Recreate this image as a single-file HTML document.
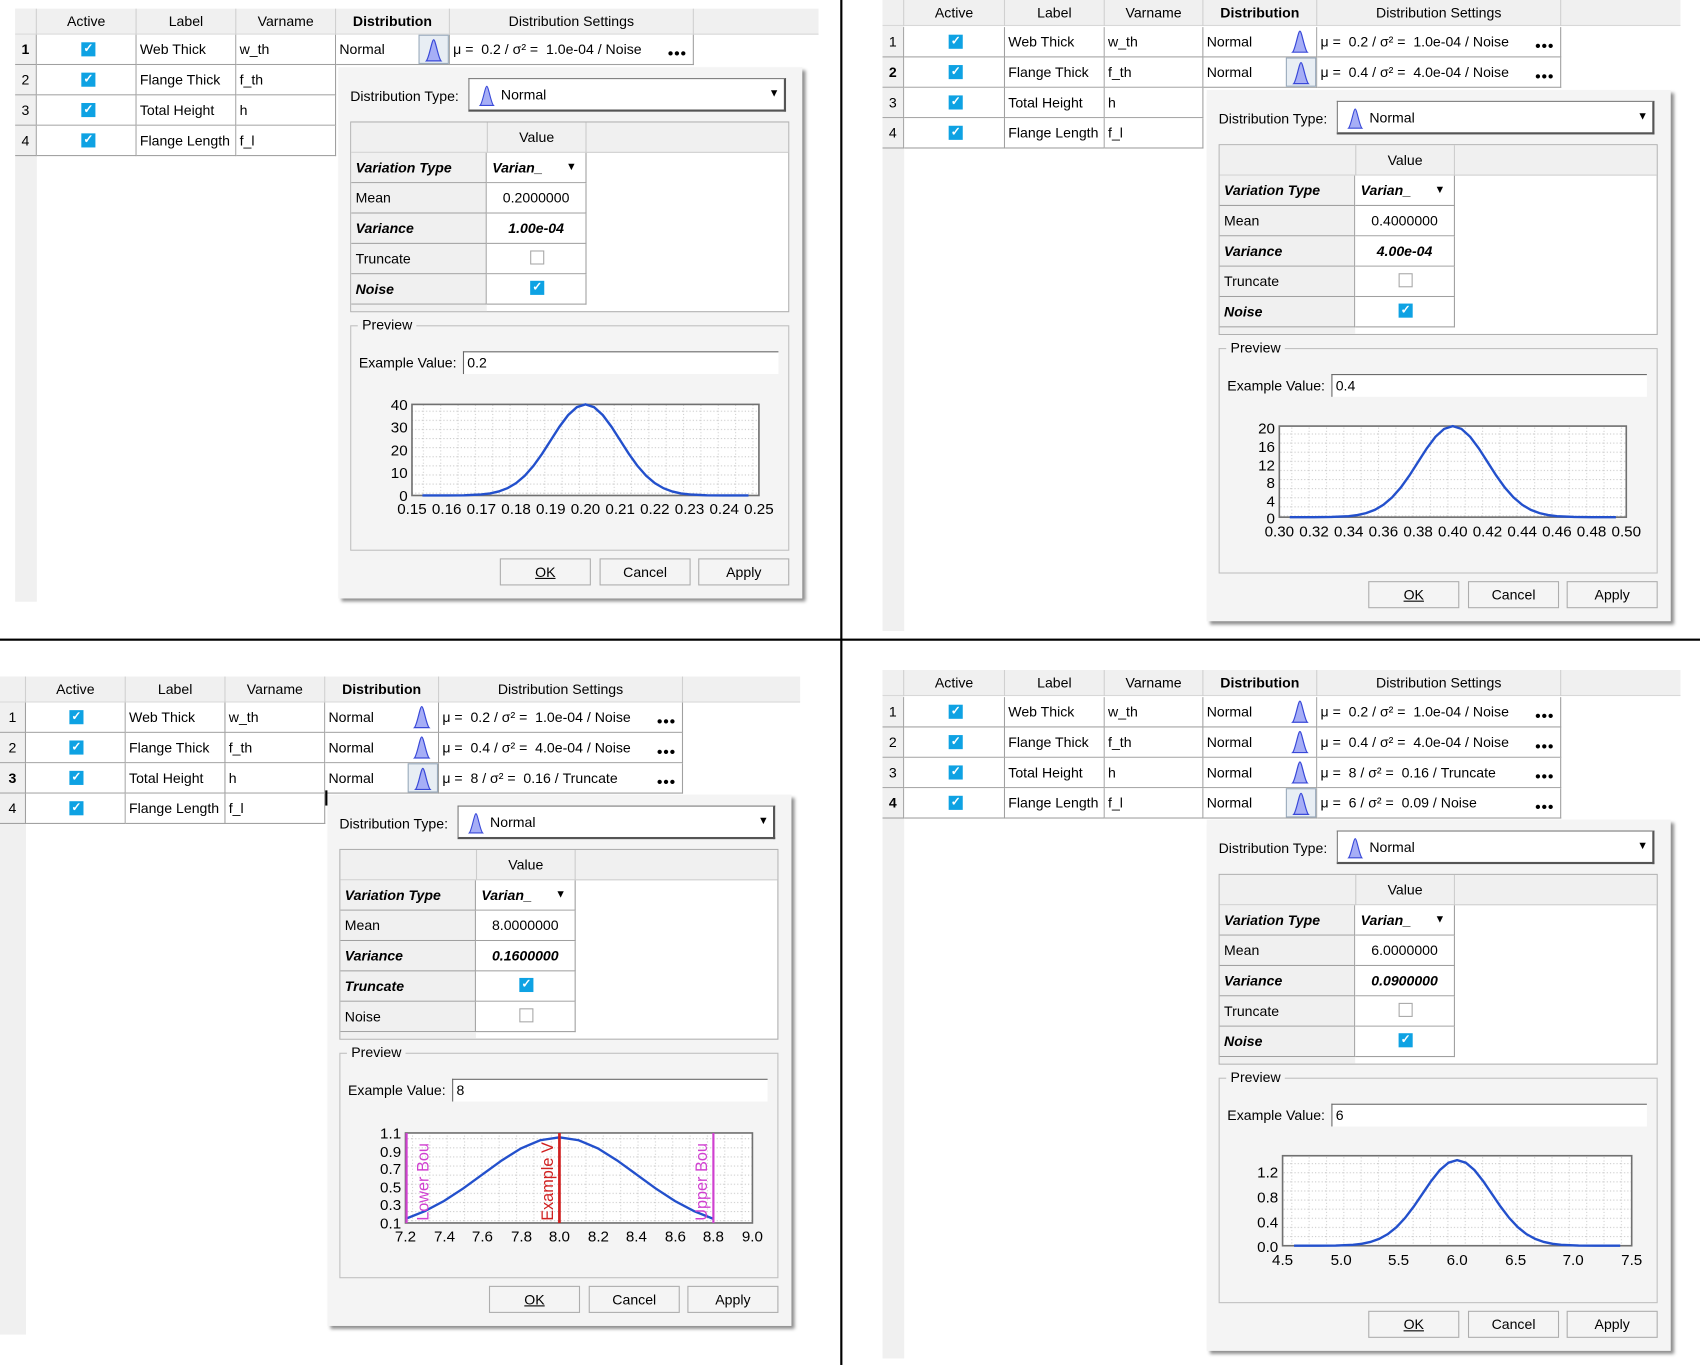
<!DOCTYPE html>
<html><head><meta charset="utf-8">
<style>
*{box-sizing:border-box;margin:0;padding:0}
html,body{width:1700px;height:1365px;overflow:hidden;background:#fff}
#root{position:absolute;left:0;top:0;width:1568px;height:1259px;transform:scale(1.08418);transform-origin:0 0;font-family:"Liberation Sans",sans-serif;font-size:13px;color:#000}
.a{position:absolute}
.q{position:absolute}
.hb{position:absolute;left:0;top:0;height:24px;background:#f0f0f0;border-bottom:1px solid #d8d8d8}
.gut{position:absolute;left:0;width:20px;background:#f0f0f0}
.h{position:absolute;top:0;height:24px;line-height:24px;text-align:center;border-right:1px solid #d0d0d0}
.c{position:absolute;height:28px;line-height:28px;border-right:1px solid #a0a0a0;border-bottom:1px solid #a0a0a0;background:#fff;padding-left:3px;white-space:nowrap;overflow:hidden}
.rn{position:absolute;left:0;width:20px;height:28px;line-height:28px;text-align:center;border-bottom:1px solid #a0a0a0;border-right:1px solid #a0a0a0;background:#f0f0f0}
.cb{position:absolute;width:13px;height:13px;background:#0ea2e3;color:#fff;font-size:11px;line-height:13px;text-align:center;font-weight:bold}
.cbe{position:absolute;width:13px;height:13px;border:1px solid #a8a8a8;background:#fff}
.ib{position:absolute;width:28px;height:27px}
.ib.sel{border:1px solid #9ab;background:#e8eef4}
.dots{position:absolute;font-weight:bold;font-size:14px;letter-spacing:1px}
.dlg{position:absolute;width:428px;height:490px;background:#f4f4f4;box-shadow:3px 3px 3px rgba(0,0,0,.45)}
.combo{position:absolute;left:120px;top:10px;width:293px;height:31px;background:#fff;border-top:1px solid #7a7a7a;border-left:1px solid #7a7a7a;border-right:2px solid #555;border-bottom:2px solid #555}
.grid{position:absolute;left:11px;top:50px;width:405px;height:176px;background:#fff;border:1px solid #b0b0b0}
.gh{position:absolute;left:0;top:0;width:403px;height:28px;background:#f0f0f0;border-bottom:1px solid #d0d0d0}
.gl{position:absolute;left:0;width:125px;height:28px;line-height:28px;padding-left:4px;background:#f0f0f0;border-bottom:1px solid #a0a0a0;border-right:1px solid #a0a0a0}
.gv{position:absolute;left:125px;width:92px;height:28px;line-height:28px;background:#fff;border-bottom:1px solid #a0a0a0;border-right:1px solid #a0a0a0;text-align:center}
.bi{font-weight:bold;font-style:italic}
.grp{position:absolute;left:11px;top:238px;width:405px;height:208px;border:1px solid #c0c0c0}
.leg{position:absolute;left:6px;top:-9px;background:#f4f4f4;padding:0 4px}
.inp{position:absolute;left:115px;top:262px;width:291px;height:21px;background:#fff;border-top:1px solid #666;border-left:1px solid #666;line-height:20px;padding-left:3px}
.btn{position:absolute;top:453px;width:84px;height:25px;border:1px solid #adadad;background:#f4f4f4;text-align:center;line-height:23px}
svg text{font-family:"Liberation Sans",sans-serif}
</style></head><body><div id="root">

<svg width="0" height="0" style="position:absolute">
<defs>
<symbol id="ico" viewBox="0 0 20 26"><path d="M2,25 C5,22 8,2 10,2 C12,2 15,22 18,25 Z" fill="#a6aef6" stroke="#3848d8" stroke-width="1.3"/></symbol>
<pattern id="gp" width="16" height="8.4" patternUnits="userSpaceOnUse"><path d="M0,0.5H16" stroke="#c8c8c8" stroke-dasharray="1,2"/><path d="M0.5,0V8.4" stroke="#d0d0d0" stroke-dasharray="1,2"/></pattern>
</defs>
</svg>

<!-- dividers -->
<div class="a" style="left:0;top:589px;width:1568px;height:2px;background:#000"></div>
<div class="a" style="left:775px;top:0;width:2px;height:1259px;background:#000"></div>

<!-- ============ Q1 TABLE ============ -->
<div class="q" style="left:14px;top:8px">
<div class="gut" style="top:0;height:547px"></div>
<div class="hb" style="width:741px"></div>
<div class="h" style="left:0;width:20px"></div>
<div class="h" style="left:20px;width:92px">Active</div>
<div class="h" style="left:112px;width:92px">Label</div>
<div class="h" style="left:204px;width:92px">Varname</div>
<div class="h" style="left:296px;width:105px;font-weight:bold">Distribution</div>
<div class="h" style="left:401px;width:225px">Distribution Settings</div>

<div class="rn" style="top:24px;font-weight:bold">1</div>
<div class="c" style="left:20px;top:24px;width:92px"></div><div class="cb" style="left:61px;top:31px">✓</div>
<div class="c" style="left:112px;top:24px;width:92px">Web Thick</div>
<div class="c" style="left:204px;top:24px;width:92px">w_th</div>
<div class="c" style="left:296px;top:24px;width:105px">Normal</div>
<div class="ib sel" style="left:372px;top:24px"><svg width="26" height="25"><use href="#ico" x="4" y="2" width="18" height="22"/></svg></div>
<div class="c" style="left:401px;top:24px;width:225px">μ =&nbsp; 0.2 / σ² =&nbsp; 1.0e-04 / Noise</div>
<div class="dots" style="left:602px;top:33px">•••</div>

<div class="rn" style="top:52px">2</div>
<div class="c" style="left:20px;top:52px;width:92px"></div><div class="cb" style="left:61px;top:59px">✓</div>
<div class="c" style="left:112px;top:52px;width:92px">Flange Thick</div>
<div class="c" style="left:204px;top:52px;width:92px">f_th</div>
<div class="rn" style="top:80px">3</div>
<div class="c" style="left:20px;top:80px;width:92px"></div><div class="cb" style="left:61px;top:87px">✓</div>
<div class="c" style="left:112px;top:80px;width:92px">Total Height</div>
<div class="c" style="left:204px;top:80px;width:92px">h</div>
<div class="rn" style="top:108px">4</div>
<div class="c" style="left:20px;top:108px;width:92px"></div><div class="cb" style="left:61px;top:115px">✓</div>
<div class="c" style="left:112px;top:108px;width:92px">Flange Length</div>
<div class="c" style="left:204px;top:108px;width:92px">f_l</div>
</div>

<!-- Q1 DIALOG -->
<div class="dlg" style="left:312px;top:62px">
<div class="a" style="left:11px;top:19px">Distribution Type:</div>
<div class="combo"><svg class="a" style="left:6px;top:5px" width="20" height="20"><use href="#ico" width="20" height="20"/></svg><span class="a" style="left:29px;top:7px">Normal</span><span class="a" style="right:4px;top:8px;font-size:10px">▼</span></div>
<div class="grid"><div class="gh"></div>
<div class="a" style="left:125px;top:0;width:92px;height:28px;line-height:28px;text-align:center;border-left:1px solid #ccc;border-right:1px solid #ccc">Value</div>
<div class="gl bi" style="top:28px">Variation Type</div><div class="gv bi" style="top:28px;text-align:left;padding-left:5px">Varian_<span style="position:absolute;right:8px;font-size:10px;font-style:normal">▼</span></div>
<div class="gl" style="top:56px">Mean</div><div class="gv" style="top:56px">0.2000000</div>
<div class="gl bi" style="top:84px">Variance</div><div class="gv bi" style="top:84px">1.00e-04</div>
<div class="gl" style="top:112px">Truncate</div><div class="gv" style="top:112px"></div><div class="cbe" style="left:165px;top:118px"></div>
<div class="gl bi" style="top:140px">Noise</div><div class="gv" style="top:140px"></div><div class="cb" style="left:165px;top:146px">✓</div>
<div class="a" style="left:0;top:168px;width:125px;height:6px;background:#f0f0f0"></div>
</div>
<div class="grp"><span class="leg">Preview</span></div>
<div class="a" style="left:19px;top:265px">Example Value:</div>
<div class="inp">0.2</div>
<svg class="a" style="left:30px;top:300px" width="395" height="125">
<rect x="38" y="11" width="320" height="84" fill="#fff"/><rect x="38" y="11" width="320" height="84" fill="url(#gp)"/>
<rect x="38" y="11" width="320" height="84" fill="none" stroke="#707070" stroke-width="1.5"/>
<g transform="translate(198,11) scale(32,84)"><path vector-effect="non-scaling-stroke" fill="none" stroke="#2350cc" stroke-width="2.2" d="M-4.7,1 L-4,1 L-3.5,.9978 L-3,.9889 L-2.75,.9772 L-2.5,.9561 L-2.25,.9204 L-2,.8647 L-1.75,.7837 L-1.5,.6753 L-1.25,.5422 L-1,.3935 L-.75,.2452 L-.5,.1175 L-.25,.031 L0,0 L.25,.031 L.5,.1175 L.75,.2452 L1,.3935 L1.25,.5422 L1.5,.6753 L1.75,.7837 L2,.8647 L2.25,.9204 L2.5,.9561 L2.75,.9772 L3,.9889 L3.5,.9978 L4,1 L4.7,1"/></g>
<g font-size="14" text-anchor="end"><text x="34" y="16">40</text><text x="34" y="37">30</text><text x="34" y="58">20</text><text x="34" y="79">10</text><text x="34" y="100">0</text></g>
<g font-size="14" text-anchor="middle"><text x="38" y="112">0.15</text><text x="70" y="112">0.16</text><text x="102" y="112">0.17</text><text x="134" y="112">0.18</text><text x="166" y="112">0.19</text><text x="198" y="112">0.20</text><text x="230" y="112">0.21</text><text x="262" y="112">0.22</text><text x="294" y="112">0.23</text><text x="326" y="112">0.24</text><text x="358" y="112">0.25</text></g>
</svg>
<div class="btn" style="left:149px"><u>OK</u></div><div class="btn" style="left:241px">Cancel</div><div class="btn" style="left:332px">Apply</div>
</div>

<!-- ============ Q2 TABLE ============ -->
<div class="q" style="left:814px;top:0px">
<div class="gut" style="top:0;height:582px"></div>
<div class="hb" style="width:736px"></div>
<div class="h" style="left:0;width:20px"></div>
<div class="h" style="left:20px;width:93px">Active</div>
<div class="h" style="left:113px;width:92px">Label</div>
<div class="h" style="left:205px;width:91px">Varname</div>
<div class="h" style="left:296px;width:105px;font-weight:bold">Distribution</div>
<div class="h" style="left:401px;width:225px">Distribution Settings</div>

<div class="rn" style="top:25px">1</div>
<div class="c" style="left:20px;top:25px;width:93px"></div><div class="cb" style="left:61px;top:32px">✓</div>
<div class="c" style="left:113px;top:25px;width:92px">Web Thick</div>
<div class="c" style="left:205px;top:25px;width:91px">w_th</div>
<div class="c" style="left:296px;top:25px;width:105px">Normal</div>
<div class="ib" style="left:372px;top:25px"><svg width="26" height="25"><use href="#ico" x="4" y="2" width="18" height="22"/></svg></div>
<div class="c" style="left:401px;top:25px;width:225px">μ =&nbsp; 0.2 / σ² =&nbsp; 1.0e-04 / Noise</div>
<div class="dots" style="left:602px;top:34px">•••</div>

<div class="rn" style="top:53px;font-weight:bold">2</div>
<div class="c" style="left:20px;top:53px;width:93px"></div><div class="cb" style="left:61px;top:60px">✓</div>
<div class="c" style="left:113px;top:53px;width:92px">Flange Thick</div>
<div class="c" style="left:205px;top:53px;width:91px">f_th</div>
<div class="c" style="left:296px;top:53px;width:105px">Normal</div>
<div class="ib sel" style="left:372px;top:53px"><svg width="26" height="25"><use href="#ico" x="4" y="2" width="18" height="22"/></svg></div>
<div class="c" style="left:401px;top:53px;width:225px">μ =&nbsp; 0.4 / σ² =&nbsp; 4.0e-04 / Noise</div>
<div class="dots" style="left:602px;top:62px">•••</div>

<div class="rn" style="top:81px">3</div>
<div class="c" style="left:20px;top:81px;width:93px"></div><div class="cb" style="left:61px;top:88px">✓</div>
<div class="c" style="left:113px;top:81px;width:92px">Total Height</div>
<div class="c" style="left:205px;top:81px;width:91px">h</div>
<div class="rn" style="top:109px">4</div>
<div class="c" style="left:20px;top:109px;width:93px"></div><div class="cb" style="left:61px;top:116px">✓</div>
<div class="c" style="left:113px;top:109px;width:92px">Flange Length</div>
<div class="c" style="left:205px;top:109px;width:91px">f_l</div>
</div>

<!-- Q2 DIALOG -->
<div class="dlg" style="left:1113px;top:83px">
<div class="a" style="left:11px;top:19px">Distribution Type:</div>
<div class="combo"><svg class="a" style="left:6px;top:5px" width="20" height="20"><use href="#ico" width="20" height="20"/></svg><span class="a" style="left:29px;top:7px">Normal</span><span class="a" style="right:4px;top:8px;font-size:10px">▼</span></div>
<div class="grid"><div class="gh"></div>
<div class="a" style="left:125px;top:0;width:92px;height:28px;line-height:28px;text-align:center;border-left:1px solid #ccc;border-right:1px solid #ccc">Value</div>
<div class="gl bi" style="top:28px">Variation Type</div><div class="gv bi" style="top:28px;text-align:left;padding-left:5px">Varian_<span style="position:absolute;right:8px;font-size:10px;font-style:normal">▼</span></div>
<div class="gl" style="top:56px">Mean</div><div class="gv" style="top:56px">0.4000000</div>
<div class="gl bi" style="top:84px">Variance</div><div class="gv bi" style="top:84px">4.00e-04</div>
<div class="gl" style="top:112px">Truncate</div><div class="gv" style="top:112px"></div><div class="cbe" style="left:165px;top:118px"></div>
<div class="gl bi" style="top:140px">Noise</div><div class="gv" style="top:140px"></div><div class="cb" style="left:165px;top:146px">✓</div>
<div class="a" style="left:0;top:168px;width:125px;height:6px;background:#f0f0f0"></div>
</div>
<div class="grp"><span class="leg">Preview</span></div>
<div class="a" style="left:19px;top:265px">Example Value:</div>
<div class="inp">0.4</div>
<svg class="a" style="left:30px;top:300px" width="395" height="125">
<rect x="37" y="10" width="320" height="84" fill="#fff"/><rect x="37" y="10" width="320" height="84" fill="url(#gp)"/>
<rect x="37" y="10" width="320" height="84" fill="none" stroke="#707070" stroke-width="1.5"/>
<g transform="translate(197,10) scale(32,84)"><path vector-effect="non-scaling-stroke" fill="none" stroke="#2350cc" stroke-width="2.2" d="M-4.7,1 L-4,1 L-3.5,.9978 L-3,.9889 L-2.75,.9772 L-2.5,.9561 L-2.25,.9204 L-2,.8647 L-1.75,.7837 L-1.5,.6753 L-1.25,.5422 L-1,.3935 L-.75,.2452 L-.5,.1175 L-.25,.031 L0,0 L.25,.031 L.5,.1175 L.75,.2452 L1,.3935 L1.25,.5422 L1.5,.6753 L1.75,.7837 L2,.8647 L2.25,.9204 L2.5,.9561 L2.75,.9772 L3,.9889 L3.5,.9978 L4,1 L4.7,1"/></g>
<g font-size="14" text-anchor="end"><text x="33" y="17">20</text><text x="33" y="34">16</text><text x="33" y="51">12</text><text x="33" y="67">8</text><text x="33" y="84">4</text><text x="33" y="100">0</text></g>
<g font-size="14" text-anchor="middle"><text x="37" y="112">0.30</text><text x="69" y="112">0.32</text><text x="101" y="112">0.34</text><text x="133" y="112">0.36</text><text x="165" y="112">0.38</text><text x="197" y="112">0.40</text><text x="229" y="112">0.42</text><text x="261" y="112">0.44</text><text x="293" y="112">0.46</text><text x="325" y="112">0.48</text><text x="357" y="112">0.50</text></g>
</svg>
<div class="btn" style="left:149px"><u>OK</u></div><div class="btn" style="left:241px">Cancel</div><div class="btn" style="left:332px">Apply</div>
</div>

<!-- ============ Q3 TABLE ============ -->
<div class="q" style="left:0px;top:624px">
<div class="gut" style="top:0;height:607px;width:24px"></div>
<div class="hb" style="width:738px"></div>
<div class="h" style="left:0;width:24px"></div>
<div class="h" style="left:24px;width:92px">Active</div>
<div class="h" style="left:116px;width:92px">Label</div>
<div class="h" style="left:208px;width:92px">Varname</div>
<div class="h" style="left:300px;width:105px;font-weight:bold">Distribution</div>
<div class="h" style="left:405px;width:225px">Distribution Settings</div>

<div class="rn" style="top:24px;width:24px">1</div>
<div class="c" style="left:24px;top:24px;width:92px"></div><div class="cb" style="left:64px;top:31px">✓</div>
<div class="c" style="left:116px;top:24px;width:92px">Web Thick</div>
<div class="c" style="left:208px;top:24px;width:92px">w_th</div>
<div class="c" style="left:300px;top:24px;width:105px">Normal</div>
<div class="ib" style="left:376px;top:24px"><svg width="26" height="25"><use href="#ico" x="4" y="2" width="18" height="22"/></svg></div>
<div class="c" style="left:405px;top:24px;width:225px">μ =&nbsp; 0.2 / σ² =&nbsp; 1.0e-04 / Noise</div>
<div class="dots" style="left:606px;top:33px">•••</div>

<div class="rn" style="top:52px;width:24px">2</div>
<div class="c" style="left:24px;top:52px;width:92px"></div><div class="cb" style="left:64px;top:59px">✓</div>
<div class="c" style="left:116px;top:52px;width:92px">Flange Thick</div>
<div class="c" style="left:208px;top:52px;width:92px">f_th</div>
<div class="c" style="left:300px;top:52px;width:105px">Normal</div>
<div class="ib" style="left:376px;top:52px"><svg width="26" height="25"><use href="#ico" x="4" y="2" width="18" height="22"/></svg></div>
<div class="c" style="left:405px;top:52px;width:225px">μ =&nbsp; 0.4 / σ² =&nbsp; 4.0e-04 / Noise</div>
<div class="dots" style="left:606px;top:61px">•••</div>

<div class="rn" style="top:80px;width:24px;font-weight:bold">3</div>
<div class="c" style="left:24px;top:80px;width:92px"></div><div class="cb" style="left:64px;top:87px">✓</div>
<div class="c" style="left:116px;top:80px;width:92px">Total Height</div>
<div class="c" style="left:208px;top:80px;width:92px">h</div>
<div class="c" style="left:300px;top:80px;width:105px">Normal</div>
<div class="ib sel" style="left:376px;top:80px"><svg width="26" height="25"><use href="#ico" x="4" y="2" width="18" height="22"/></svg></div>
<div class="c" style="left:405px;top:80px;width:225px">μ =&nbsp; 8 / σ² =&nbsp; 0.16 / Truncate</div>
<div class="dots" style="left:606px;top:89px">•••</div>

<div class="rn" style="top:108px;width:24px">4</div>
<div class="c" style="left:24px;top:108px;width:92px"></div><div class="cb" style="left:64px;top:115px">✓</div>
<div class="c" style="left:116px;top:108px;width:92px">Flange Length</div>
<div class="c" style="left:208px;top:108px;width:92px">f_l</div>
</div>

<!-- Q3 DIALOG -->
<div class="dlg" style="left:302px;top:733px">
<div class="a" style="left:11px;top:19px">Distribution Type:</div>
<div class="combo"><svg class="a" style="left:6px;top:5px" width="20" height="20"><use href="#ico" width="20" height="20"/></svg><span class="a" style="left:29px;top:7px">Normal</span><span class="a" style="right:4px;top:8px;font-size:10px">▼</span></div>
<div class="grid"><div class="gh"></div>
<div class="a" style="left:125px;top:0;width:92px;height:28px;line-height:28px;text-align:center;border-left:1px solid #ccc;border-right:1px solid #ccc">Value</div>
<div class="gl bi" style="top:28px">Variation Type</div><div class="gv bi" style="top:28px;text-align:left;padding-left:5px">Varian_<span style="position:absolute;right:8px;font-size:10px;font-style:normal">▼</span></div>
<div class="gl" style="top:56px">Mean</div><div class="gv" style="top:56px">8.0000000</div>
<div class="gl bi" style="top:84px">Variance</div><div class="gv bi" style="top:84px">0.1600000</div>
<div class="gl bi" style="top:112px">Truncate</div><div class="gv" style="top:112px"></div><div class="cb" style="left:165px;top:118px">✓</div>
<div class="gl" style="top:140px">Noise</div><div class="gv" style="top:140px"></div><div class="cbe" style="left:165px;top:146px"></div>
<div class="a" style="left:0;top:168px;width:125px;height:6px;background:#f0f0f0"></div>
</div>
<div class="grp"><span class="leg">Preview</span></div>
<div class="a" style="left:19px;top:265px">Example Value:</div>
<div class="inp">8</div>
<svg class="a" style="left:30px;top:300px" width="395" height="125">
<rect x="42" y="12" width="320" height="83" fill="#fff"/><rect x="42" y="12" width="320" height="83" fill="url(#gp)"/>
<rect x="42" y="12" width="320" height="83" fill="none" stroke="#707070" stroke-width="1.5"/>
<g transform="translate(184,16) scale(71,87)"><path vector-effect="non-scaling-stroke" fill="none" stroke="#2350cc" stroke-width="2.2" d="M-2,.8647 L-1.75,.7837 L-1.5,.6753 L-1.25,.5422 L-1,.3935 L-.75,.2452 L-.5,.1175 L-.25,.031 L0,0 L.25,.031 L.5,.1175 L.75,.2452 L1,.3935 L1.25,.5422 L1.5,.6753 L1.75,.7837 L2,.8647"/></g>
<line x1="43" y1="12" x2="43" y2="95" stroke="#d040d0" stroke-width="2"/>
<line x1="326" y1="12" x2="326" y2="95" stroke="#d040d0" stroke-width="2"/>
<line x1="184" y1="12" x2="184" y2="95" stroke="#d02020" stroke-width="2.5"/>
<text transform="translate(63,93) rotate(-90)" font-size="15" fill="#d040d0">Lower Bou</text>
<text transform="translate(178,93) rotate(-90)" font-size="15" fill="#d02020">Example V</text>
<text transform="translate(320,93) rotate(-90)" font-size="15" fill="#d040d0">Upper Bou</text>
<g font-size="14" text-anchor="end"><text x="38" y="17">1.1</text><text x="38" y="34">0.9</text><text x="38" y="50">0.7</text><text x="38" y="67">0.5</text><text x="38" y="83">0.3</text><text x="38" y="100">0.1</text></g>
<g font-size="14" text-anchor="middle"><text x="42" y="112">7.2</text><text x="78" y="112">7.4</text><text x="113" y="112">7.6</text><text x="149" y="112">7.8</text><text x="184" y="112">8.0</text><text x="220" y="112">8.2</text><text x="255" y="112">8.4</text><text x="291" y="112">8.6</text><text x="326" y="112">8.8</text><text x="362" y="112">9.0</text></g>
</svg>
<div class="btn" style="left:149px"><u>OK</u></div><div class="btn" style="left:241px">Cancel</div><div class="btn" style="left:332px">Apply</div>
</div>
<div class="a" style="left:300px;top:729px;width:2px;height:14px;background:#000"></div>

<!-- ============ Q4 TABLE ============ -->
<div class="q" style="left:814px;top:618px">
<div class="gut" style="top:0;height:635px"></div>
<div class="hb" style="width:736px"></div>
<div class="h" style="left:0;width:20px"></div>
<div class="h" style="left:20px;width:93px">Active</div>
<div class="h" style="left:113px;width:92px">Label</div>
<div class="h" style="left:205px;width:91px">Varname</div>
<div class="h" style="left:296px;width:105px;font-weight:bold">Distribution</div>
<div class="h" style="left:401px;width:225px">Distribution Settings</div>

<div class="rn" style="top:25px">1</div>
<div class="c" style="left:20px;top:25px;width:93px"></div><div class="cb" style="left:61px;top:32px">✓</div>
<div class="c" style="left:113px;top:25px;width:92px">Web Thick</div>
<div class="c" style="left:205px;top:25px;width:91px">w_th</div>
<div class="c" style="left:296px;top:25px;width:105px">Normal</div>
<div class="ib" style="left:372px;top:25px"><svg width="26" height="25"><use href="#ico" x="4" y="2" width="18" height="22"/></svg></div>
<div class="c" style="left:401px;top:25px;width:225px">μ =&nbsp; 0.2 / σ² =&nbsp; 1.0e-04 / Noise</div>
<div class="dots" style="left:602px;top:34px">•••</div>

<div class="rn" style="top:53px">2</div>
<div class="c" style="left:20px;top:53px;width:93px"></div><div class="cb" style="left:61px;top:60px">✓</div>
<div class="c" style="left:113px;top:53px;width:92px">Flange Thick</div>
<div class="c" style="left:205px;top:53px;width:91px">f_th</div>
<div class="c" style="left:296px;top:53px;width:105px">Normal</div>
<div class="ib" style="left:372px;top:53px"><svg width="26" height="25"><use href="#ico" x="4" y="2" width="18" height="22"/></svg></div>
<div class="c" style="left:401px;top:53px;width:225px">μ =&nbsp; 0.4 / σ² =&nbsp; 4.0e-04 / Noise</div>
<div class="dots" style="left:602px;top:62px">•••</div>

<div class="rn" style="top:81px">3</div>
<div class="c" style="left:20px;top:81px;width:93px"></div><div class="cb" style="left:61px;top:88px">✓</div>
<div class="c" style="left:113px;top:81px;width:92px">Total Height</div>
<div class="c" style="left:205px;top:81px;width:91px">h</div>
<div class="c" style="left:296px;top:81px;width:105px">Normal</div>
<div class="ib" style="left:372px;top:81px"><svg width="26" height="25"><use href="#ico" x="4" y="2" width="18" height="22"/></svg></div>
<div class="c" style="left:401px;top:81px;width:225px">μ =&nbsp; 8 / σ² =&nbsp; 0.16 / Truncate</div>
<div class="dots" style="left:602px;top:90px">•••</div>

<div class="rn" style="top:109px;font-weight:bold">4</div>
<div class="c" style="left:20px;top:109px;width:93px"></div><div class="cb" style="left:61px;top:116px">✓</div>
<div class="c" style="left:113px;top:109px;width:92px">Flange Length</div>
<div class="c" style="left:205px;top:109px;width:91px">f_l</div>
<div class="c" style="left:296px;top:109px;width:105px">Normal</div>
<div class="ib sel" style="left:372px;top:109px"><svg width="26" height="25"><use href="#ico" x="4" y="2" width="18" height="22"/></svg></div>
<div class="c" style="left:401px;top:109px;width:225px">μ =&nbsp; 6 / σ² =&nbsp; 0.09 / Noise</div>
<div class="dots" style="left:602px;top:118px">•••</div>
</div>

<!-- Q4 DIALOG -->
<div class="dlg" style="left:1113px;top:756px">
<div class="a" style="left:11px;top:19px">Distribution Type:</div>
<div class="combo"><svg class="a" style="left:6px;top:5px" width="20" height="20"><use href="#ico" width="20" height="20"/></svg><span class="a" style="left:29px;top:7px">Normal</span><span class="a" style="right:4px;top:8px;font-size:10px">▼</span></div>
<div class="grid"><div class="gh"></div>
<div class="a" style="left:125px;top:0;width:92px;height:28px;line-height:28px;text-align:center;border-left:1px solid #ccc;border-right:1px solid #ccc">Value</div>
<div class="gl bi" style="top:28px">Variation Type</div><div class="gv bi" style="top:28px;text-align:left;padding-left:5px">Varian_<span style="position:absolute;right:8px;font-size:10px;font-style:normal">▼</span></div>
<div class="gl" style="top:56px">Mean</div><div class="gv" style="top:56px">6.0000000</div>
<div class="gl bi" style="top:84px">Variance</div><div class="gv bi" style="top:84px">0.0900000</div>
<div class="gl" style="top:112px">Truncate</div><div class="gv" style="top:112px"></div><div class="cbe" style="left:165px;top:118px"></div>
<div class="gl bi" style="top:140px">Noise</div><div class="gv" style="top:140px"></div><div class="cb" style="left:165px;top:146px">✓</div>
<div class="a" style="left:0;top:168px;width:125px;height:6px;background:#f0f0f0"></div>
</div>
<div class="grp"><span class="leg">Preview</span></div>
<div class="a" style="left:19px;top:265px">Example Value:</div>
<div class="inp">6</div>
<svg class="a" style="left:30px;top:300px" width="395" height="125">
<rect x="40" y="10" width="322" height="83" fill="#fff"/><rect x="40" y="10" width="322" height="83" fill="url(#gp)"/>
<rect x="40" y="10" width="322" height="83" fill="none" stroke="#707070" stroke-width="1.5"/>
<g transform="translate(201,14) scale(32,79)"><path vector-effect="non-scaling-stroke" fill="none" stroke="#2350cc" stroke-width="2.2" d="M-4.7,1 L-4,1 L-3.5,.9978 L-3,.9889 L-2.75,.9772 L-2.5,.9561 L-2.25,.9204 L-2,.8647 L-1.75,.7837 L-1.5,.6753 L-1.25,.5422 L-1,.3935 L-.75,.2452 L-.5,.1175 L-.25,.031 L0,0 L.25,.031 L.5,.1175 L.75,.2452 L1,.3935 L1.25,.5422 L1.5,.6753 L1.75,.7837 L2,.8647 L2.25,.9204 L2.5,.9561 L2.75,.9772 L3,.9889 L3.5,.9978 L4,1 L4.7,1"/></g>
<g font-size="14" text-anchor="end"><text x="36" y="30">1.2</text><text x="36" y="53">0.8</text><text x="36" y="76">0.4</text><text x="36" y="99">0.0</text></g>
<g font-size="14" text-anchor="middle"><text x="40" y="111">4.5</text><text x="94" y="111">5.0</text><text x="147" y="111">5.5</text><text x="201" y="111">6.0</text><text x="255" y="111">6.5</text><text x="308" y="111">7.0</text><text x="362" y="111">7.5</text></g>
</svg>
<div class="btn" style="left:149px"><u>OK</u></div><div class="btn" style="left:241px">Cancel</div><div class="btn" style="left:332px">Apply</div>
</div>

</div></body></html>
